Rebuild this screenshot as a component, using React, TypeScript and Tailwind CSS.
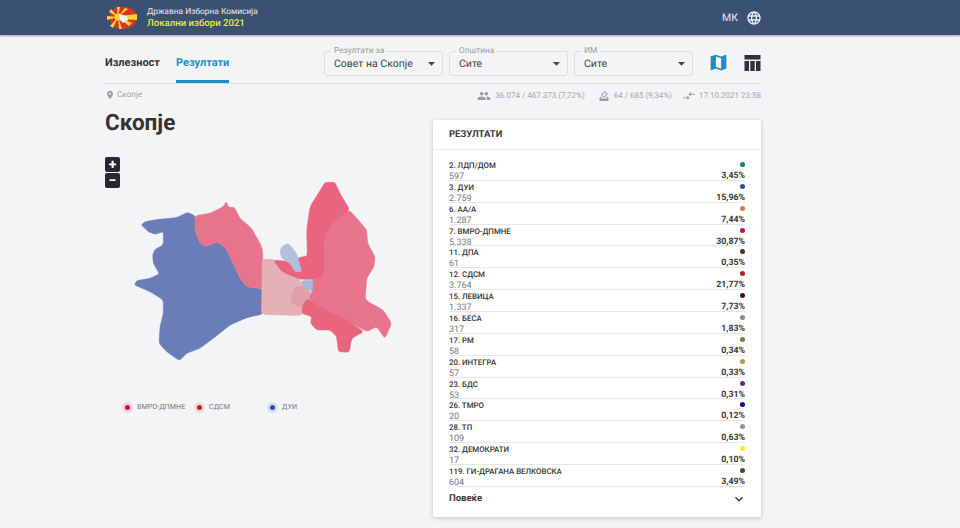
import { MdArrowDropDown, MdCompareArrows, MdExpandMore, MdHowToVote, MdLanguage, MdMap, MdPeople, MdPlace } from "react-icons/md";

const results = [
  { name: "2. ЛДП/ДОМ", votes: "597", pct: "3,45%", color: "#0f8a50" },
  { name: "3. ДУИ", votes: "2.759", pct: "15,96%", color: "#2f4b9c" },
  { name: "6. АА/А", votes: "1.287", pct: "7,44%", color: "#d9773a" },
  { name: "7. ВМРО-ДПМНЕ", votes: "5.338", pct: "30,87%", color: "#d40f36" },
  { name: "11. ДПА", votes: "61", pct: "0,35%", color: "#4a2f25" },
  { name: "12. СДСМ", votes: "3.764", pct: "21,77%", color: "#bd1e32" },
  { name: "15. ЛЕВИЦА", votes: "1.337", pct: "7,73%", color: "#4a0a14" },
  { name: "16. БЕСА", votes: "317", pct: "1,83%", color: "#8a8a8a" },
  { name: "17. РМ", votes: "58", pct: "0,34%", color: "#96703c" },
  { name: "20. ИНТЕГРА", votes: "57", pct: "0,33%", color: "#b89a3a" },
  { name: "23. БДС", votes: "53", pct: "0,31%", color: "#6a2a80" },
  { name: "26. ТМРО", votes: "20", pct: "0,12%", color: "#0a0a9c" },
  { name: "28. ТП", votes: "109", pct: "0,63%", color: "#7f9a90" },
  { name: "32. ДЕМОКРАТИ", votes: "17", pct: "0,10%", color: "#f2ea2e" },
  { name: "119. ГИ-ДРАГАНА ВЕЛКОВСКА", votes: "604", pct: "3,49%", color: "#454f2e" },
];

const filters = [
  { label: "Резултати за", value: "Совет на Скопје" },
  { label: "Општина", value: "Сите" },
  { label: "ИМ", value: "Сите" },
];

const legend = [
  { name: "ВМРО-ДПМНЕ", color: "#d40f36", halo: "#f6d5dc", width: "w-[72px]" },
  { name: "СДСМ", color: "#bd1e32", halo: "#f3d8dc", width: "w-[73px]" },
  { name: "ДУИ", color: "#2f4b9c", halo: "#d8dff2", width: "w-[60px]" },
];

// municipalities, outline points in a 930x660 box
const regions = [
  { fill: "#6a7db8", pts: "124,225 135,215 175,208 230,203 262,187 285,197 285,240 300,280 318,290 350,275 375,290 395,330 420,385 440,410 490,417 490,492 440,503 390,525 340,565 300,595 260,610 238,632 200,605 177,580 180,530 190,490 190,450 150,425 103,405 110,392 150,385 178,372 160,340 158,315 165,298 190,285 190,245 165,253 145,245" },
  { fill: "#e8748b", pts: "285,197 330,190 370,170 378,155 387,172 403,172 420,205 455,235 488,295 490,417 440,410 420,385 395,330 375,290 350,275 318,290 300,280 285,240" },
  { fill: "#e5b0b6", pts: "486,328 522,328 545,365 600,388 605,410 635,430 612,470 605,497 500,494 484,490 486,417" },
  { fill: "#e8647f", pts: "675,97 705,97 720,130 750,180 700,220 678,260 674,320 674,380 655,388 600,388 545,365 520,330 570,335 600,322 622,318 620,240 630,170 655,130" },
  { fill: "#e8748b", pts: "748,180 775,210 800,240 803,280 825,320 822,350 800,385 795,450 850,480 875,520 855,566 830,530 800,545 735,510 670,480 625,445 636,425 636,388 672,378 672,260 698,220" },
  { fill: "#e8647f", pts: "610,452 625,446 670,478 735,508 792,545 755,565 748,607 715,605 710,560 690,540 650,540 632,520 635,500 605,490" },
  { fill: "#b3bfdc", pts: "540,300 548,288 565,280 590,310 605,365 585,365 570,340 545,325" },
  { fill: "#a9b7dc", pts: "605,392 638,390 638,425 620,418 605,410" },
  { fill: "#e29fa9", pts: "585,412 610,410 635,430 600,472 572,458 578,425" },
];

// round the corners a little, so neighbours still share their borders
function rounded(pts: string) {
  const p = pts.split(" ").map((s) => s.split(",").map(Number));
  const along = (a: number[], b: number[], t: number) => `${a[0] + (b[0] - a[0]) * t} ${a[1] + (b[1] - a[1]) * t}`;
  let d = "";
  p.forEach((pt, i) => {
    const prev = p[(i + p.length - 1) % p.length];
    const next = p[(i + 1) % p.length];
    d += `${i === 0 ? "M" : " L"}${along(pt, prev, 0.2)} Q${pt[0]} ${pt[1]} ${along(pt, next, 0.2)}`;
  });
  return d + "Z";
}

function Logo() {
  return (
    <svg width="32" height="26" viewBox="0 0 32 26" className="shrink-0">
      <path d="M4 13 C4 5 10 1 16 2 C22 1 30 5 31 11 C32 17 27 24 18 24 C10 25 4 20 4 13Z" fill="#d8352a" />
      <path d="M12 12 L5 4 L3 7Z M12 12 L1 11 L1 15Z M12 12 L4 21 L7 23Z M12 12 L13 24 L16 24Z M12 12 L11 2 L14 2Z M14 11 L31 9 L31 15 L14 14Z M12 12 L22 4 L19 3Z M12 12 L23 21 L26 18Z" fill="#f6d32d" />
      <circle cx="12" cy="12" r="3.5" fill="#f6d32d" />
      <path d="M13 9 L21 11 L22 15 L17 18 L14 15Z" fill="#f4f1ea" />
    </svg>
  );
}

function SkopjeMap() {
  return (
    <svg viewBox="0 0 930 660" width="310" height="220" className="block">
      {regions.map((r, i) => (
        <path key={i} d={rounded(r.pts)} fill={r.fill} stroke={r.fill} strokeWidth="1.5" strokeLinejoin="round" />
      ))}
      <path d="M640 430 L700 445 L790 490 L822 525" fill="none" stroke="#ec8398" strokeWidth="1.5" />
    </svg>
  );
}

export default function App() {
  return (
    <div className="h-[528px] overflow-hidden bg-[#f3f4f6] font-['Roboto',sans-serif] text-[#333333] [text-rendering:geometricPrecision]">
      <header className="flex h-[35px] items-center justify-between bg-[#3a5173] pl-[106px] pr-[198px] shadow-[0_1px_2px_rgba(0,0,0,0.35)]">
        <div className="flex items-center gap-[9px]">
          <Logo />
          <div className="text-[8.4px] leading-[11px]">
            <div className="text-[#e6e9ee]">Државна Изборна Комисија</div>
            <div className="text-[9.6px] font-medium text-[#e4ee3a]">Локални избори 2021</div>
          </div>
        </div>
        <div className="flex items-center gap-[8px] text-[10.5px] text-[#e8ebf0]">
          МК
          <MdLanguage size={16} />
        </div>
      </header>

      <main className="mx-[105px] w-[656px]">
        <div className="flex h-[49px] items-end border-b border-[#d9dbde]">
          <div className="flex h-full flex-1 gap-4 text-[11px] font-bold">
            <div className="pt-[20px]">Излезност</div>
            <div className="h-[48px] border-b-[3px] border-[#1e8fc6] pt-[20px] text-[#1e8fc6]">Резултати</div>
          </div>
          <div className="flex h-full items-start pt-[16px]">
            <div className="flex gap-[6px]">
              {filters.map((f) => (
                <div key={f.label} className="relative flex h-[25px] w-[119px] items-center justify-between rounded-[3px] border border-[#dcdee1] bg-[#f3f4f6] pl-[9px] pr-[2px] text-[10.5px] text-[#444444]">
                  <span className="absolute top-[-6px] left-[6px] bg-[#f3f4f6] px-[3px] text-[8.3px] leading-[10px] text-[#9a9da1]">{f.label}</span>
                  {f.value}
                  <MdArrowDropDown size={17} className="text-[#444444]" />
                </div>
              ))}
            </div>
            <div className="ml-[15px] flex w-[53px] items-start justify-between">
              <MdMap size={21} className="mt-[1px] text-[#1e8fc6]" />
              <svg width="17" height="16" viewBox="2 2 16 16" className="mt-[4px] text-[#2e3338]">
                <path fill="currentColor" d="M2 2 H18 V6.5 H2Z M2 8 H6.5 V18 H2Z M7.8 8 H12.2 V18 H7.8Z M13.5 8 H18 V18 H13.5Z" />
              </svg>
            </div>
          </div>
        </div>

        <div className="flex h-[23px] items-center justify-between text-[8px] text-[#a3a6aa]">
          <div className="flex items-center">
            <MdPlace size={10} className="text-[#9a9da1]" />
            <span className="ml-[2px] text-[8.2px]">Скопје</span>
          </div>
          <div className="flex items-center">
            <MdPeople size={14} className="mr-[4px] text-[#9a9da1]" />
            36.074 / 467.373 (7,72%)
            <MdHowToVote size={12} className="mr-[4px] ml-[13px] text-[#9a9da1]" />
            64 / 685 (9,34%)
            <MdCompareArrows size={14} className="mr-[3px] ml-[10px] text-[#9a9da1]" />
            17.10.2021 23:58
          </div>
        </div>

        <div className="flex items-start justify-between">
          <div className="w-[328px]">
            <h1 className="mt-[1px] text-[22.5px] leading-[30px] font-bold">Скопје</h1>
            <div className="mt-[19px] flex w-[15px] flex-col gap-[1px]">
              <div className="flex h-[15px] items-center justify-center rounded-[2px] bg-[#26282b] text-[14px] leading-none font-bold text-white">+</div>
              <div className="flex h-[15px] items-center justify-center rounded-[2px] bg-[#26282b] text-[14px] leading-none font-bold text-white">−</div>
            </div>
            <div className="mt-[-38px] ml-[-5px]">
              <SkopjeMap />
            </div>
            <div className="mt-[32px] ml-[17px] flex text-[7.2px] text-[#777a7e]">
              {legend.map((l) => (
                <div key={l.name} className={`flex items-center gap-[4px] ${l.width}`}>
                  <span className="flex h-[11px] w-[11px] items-center justify-center rounded-full" style={{ backgroundColor: l.halo }}>
                    <span className="h-[5px] w-[5px] rounded-full" style={{ backgroundColor: l.color }} />
                  </span>
                  {l.name}
                </div>
              ))}
            </div>
          </div>

          <section className="mt-[13px] h-[397px] w-[328px] rounded-[2px] bg-white shadow-[0_1px_4px_rgba(0,0,0,0.22)]">
            <div className="flex h-[30px] items-center border-b border-[#e8e9eb] px-4 pt-[2px] text-[9.5px] font-bold text-[#3a3a3a]">РЕЗУЛТАТИ</div>
            <ul className="px-4 pt-[9px]">
              {results.map((r) => (
                <li key={r.name} className="flex h-[21.87px] justify-between border-b border-[#e6e7e9] pt-[2px] text-[7.85px] leading-[10px]">
                  <div>
                    <div className="font-medium text-[#333333]">{r.name}</div>
                    <div className="mt-[1px] text-[9px] text-[#77797c]">{r.votes}</div>
                  </div>
                  <div className="flex flex-col items-end">
                    <span className="mt-[1px] mb-[4px] h-[5px] w-[5px] shrink-0 rounded-full" style={{ backgroundColor: r.color }} />
                    <span className="text-[8.8px] font-bold text-[#3a3a3a]">{r.pct}</span>
                  </div>
                </li>
              ))}
            </ul>
            <div className="flex h-[24px] items-center justify-between pr-[14px] pl-4 text-[9.5px] font-bold text-[#3a3a3a]">
              Повеќе
              <MdExpandMore size={16} />
            </div>
          </section>
        </div>
      </main>
    </div>
  );
}
